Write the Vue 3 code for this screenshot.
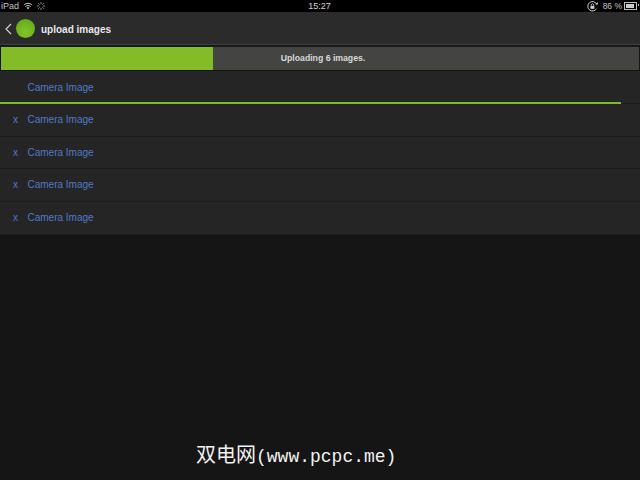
<script setup>
const rows = [
  { id: 1, name: 'Camera Image', removable: false, progress: 97 },
  { id: 2, name: 'Camera Image', removable: true },
  { id: 3, name: 'Camera Image', removable: true },
  { id: 4, name: 'Camera Image', removable: true },
  { id: 5, name: 'Camera Image', removable: true },
];
</script>

<template>
  <div class="screen">
    <div class="status">
      <div class="status-left">
        <span>iPad</span>
        <svg class="wifi" width="10" height="8" viewBox="0 0 12 9">
          <path d="M1 3.4C4 .6 8 .6 11 3.4M2.8 5.2C4.8 3.5 7.2 3.5 9.2 5.2" fill="none" stroke="#ccc" stroke-width="1.2" />
          <path d="M4.3 6.6 6 8.4l1.7-1.8C6.7 5.8 5.3 5.8 4.3 6.6Z" fill="#ccc" />
        </svg>
        <svg class="spinner" width="8" height="8" viewBox="0 0 9 9" stroke="#999" stroke-width="1">
          <path d="M4.5 0v2.5M4.5 6.5V9M0 4.5h2.5M6.5 4.5H9M1.3 1.3l1.7 1.7M6 6l1.7 1.7M1.3 7.7 3 6M6 3l1.7-1.7" />
        </svg>
      </div>
      <div class="clock">15:27</div>
      <div class="status-right">
        <svg width="11" height="11" viewBox="0 0 11 11">
          <path d="M9.6 7.6A4.7 4.7 0 1 1 9.8 3.4" fill="none" stroke="#ccc" stroke-width="1" />
          <path d="M8.2 3.6h2.6V1Z" fill="#ccc" />
          <rect x="3.4" y="4.8" width="4" height="3" fill="#ccc" />
          <path d="M4.2 4.8V4a1.3 1.3 0 0 1 2.6 0v.8" fill="none" stroke="#ccc" stroke-width=".8" />
        </svg>
        <span class="battery-text">86 %</span>
        <span class="battery"><span class="battery-fill"></span></span>
      </div>
    </div>

    <header class="header">
      <svg class="back" width="7" height="12" viewBox="0 0 7 12">
        <path d="M6 1 1 6 6 11" fill="none" stroke="#d8d8d8" stroke-width="1.1" />
      </svg>
      <span class="logo"></span>
      <span class="title">upload images</span>
    </header>

    <div class="upload-bar">
      <div class="upload-done"></div>
      <div class="upload-label">Uploading 6 images.</div>
    </div>

    <ul class="list">
      <li v-for="row in rows" :key="row.id" class="row">
        <span class="remove">{{ row.removable ? 'x' : '' }}</span>
        <span class="name">{{ row.name }}</span>
        <span v-if="row.progress" class="row-progress" :style="{ width: row.progress + '%' }"></span>
      </li>
    </ul>

    <div class="watermark"><span class="wm-cjk">双电网</span><span class="wm-url">(www.pcpc.me)</span></div>
  </div>
</template>

<style scoped>
.screen {
  position: relative;
  width: 640px;
  height: 480px;
  overflow: hidden;
  background: #151515;
  font-family: "Liberation Sans", Arial, sans-serif;
}
.status {
  height: 12px;
  background: #000;
  color: #c4c4c4;
  font-size: 9px;
  line-height: 12px;
  display: grid;
  grid-template-columns: 1fr auto 1fr;
  padding: 0 2px 0 1px;
}
.status-left { display: flex; align-items: center; gap: 4px; }
.clock { color: #d4d4d4; }
.status-right { display: flex; align-items: center; justify-content: flex-end; gap: 5px; }
.battery-text { margin-right: -3px; font-size: 8.5px; }
.battery {
  position: relative;
  width: 9px;
  height: 4px;
  border: 1px solid #bbb;
  padding: 1px;
  margin-right: 1px;
  box-sizing: content-box;
}
.battery::after {
  content: "";
  position: absolute;
  right: -3px;
  top: 1px;
  width: 1px;
  height: 2px;
  background: #bbb;
}
.battery-fill { display: block; width: 85%; height: 100%; background: #ccc; }
.header {
  height: 32px;
  background: #2b2b2b;
  border-bottom: 1px solid #3f3f3f;
  display: flex;
  align-items: center;
  padding-left: 5px;
}
.back { margin-top: 2px; }
.logo {
  width: 19px;
  height: 19px;
  border-radius: 50%;
  margin-left: 4px;
  margin-top: 1px;
  background: radial-gradient(circle at 50% 70%, #84c628, #5ca61e);
}
.title {
  margin-left: 6px;
  margin-top: 3px;
  color: #e8e8e8;
  font-size: 10px;
  font-weight: bold;
}
.upload-bar {
  position: relative;
  height: 23px;
  margin: 1px 1px 0;
  background: #444543;
  border-top: 1px solid #1b1b1b;
}
.upload-done { width: 212px; height: 100%; background: #84bc27; }
.upload-label {
  position: absolute;
  inset: 0 0 0 6px;
  text-align: center;
  line-height: 23px;
  color: #d8d8d8;
  font-size: 8.7px;
  font-weight: bold;
}
.list {
  margin: 0;
  padding: 0;
  list-style: none;
  background: #252525;
  border-top: 1px solid #161616;
}
.row {
  position: relative;
  height: 32.5px;
  box-sizing: border-box;
  display: flex;
  align-items: center;
  border-bottom: 1px solid #1d1d1d;
  font-size: 10px;
  color: #5279c9;
}
.row:first-child { height: 33px; padding-top: 1px; }
.row:last-child { height: 33.5px; padding-bottom: 1px; }
.remove { width: 27.5px; padding-left: 13px; box-sizing: border-box; }
.row-progress {
  position: absolute;
  left: 0;
  bottom: -1px;
  height: 2px;
  background: #82b92c;
}
.watermark {
  position: absolute;
  left: 196px;
  top: 442px;
  color: #f2f2f2;
  line-height: 24px;
  white-space: nowrap;
}
.wm-cjk {
  font-family: "Noto Sans CJK SC", sans-serif;
  font-size: 20px;
}
.wm-url {
  font-family: "Liberation Mono", monospace;
  font-size: 18px;
}
</style>

<style>
html, body { background: #151515; }
</style>
